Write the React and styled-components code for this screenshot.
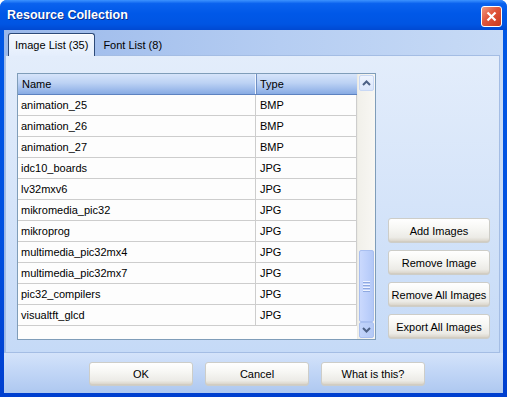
import React from "react";
import styled, { createGlobalStyle } from "styled-components";

const GlobalStyle = createGlobalStyle`
  html, body {
    margin: 0;
    padding: 0;
    background: #ffffff;
  }
  body {
    font-family: "Liberation Sans", Arial, sans-serif;
    font-size: 11px;
    color: #000;
  }
`;

const Window = styled.div`
  width: 507px;
  height: 397px;
  box-sizing: border-box;
  display: flex;
  flex-direction: column;
  background: linear-gradient(to bottom, #0058e6 0%, #0050e0 60%, #003fcf 100%);
  border-radius: 7px 7px 0 0;
  overflow: hidden;
`;

const TitleBar = styled.div`
  height: 30px;
  flex: none;
  display: flex;
  align-items: center;
  justify-content: space-between;
  padding: 0 5px 0 7px;
  background: linear-gradient(
    to bottom,
    #3d93ff 0%,
    #0a62ee 12%,
    #0058e8 45%,
    #0055e3 80%,
    #0049d2 100%
  );
`;

const Title = styled.span`
  font-family: "Liberation Sans", Arial, sans-serif;
  font-weight: bold;
  font-size: 12.5px;
  color: #ffffff;
  text-shadow: 1px 1px 0 #0a2e8c;
`;

const CloseButton = styled.div`
  width: 21px;
  height: 21px;
  box-sizing: border-box;
  border: 1px solid #ffffff;
  border-radius: 3px;
  background: linear-gradient(135deg, #f09a80 0%, #e0553a 45%, #c9391d 100%);
  display: flex;
  align-items: center;
  justify-content: center;
  margin-top: 2px;
`;

const Body = styled.div`
  flex: 1;
  margin: 0 4px 4px 4px;
  display: flex;
  flex-direction: column;
  background: linear-gradient(to right, #9ab8ea 0%, #b5cdf2 55%, #c8dbf6 100%);
`;

const TabStrip = styled.div`
  height: 25px;
  flex: none;
  display: flex;
  align-items: flex-end;
  padding-left: 4px;
`;

const Tab = styled.div`
  height: ${(p) => (p.active ? "23px" : "21px")};
  box-sizing: border-box;
  padding: 0 ${(p) => (p.active ? "6px" : "8px")};
  display: flex;
  align-items: center;
  margin-bottom: ${(p) => (p.active ? "-1px" : "0")};
  position: relative;
  z-index: ${(p) => (p.active ? 2 : 1)};
  color: #000;
  ${(p) =>
    p.active &&
    `
    border: 1px solid #2d4a78;
    border-bottom: none;
    border-radius: 3px 3px 0 0;
    background: linear-gradient(to bottom, #f4f8fe 0%, #e4eefc 100%);
    box-shadow: inset 0 1px 0 #ffffff;
  `}
`;

const Panel = styled.div`
  height: 298px;
  flex: none;
  margin: 0 3px 0 1px;
  box-sizing: border-box;
  border: 1px solid #a4bde4;
  background: linear-gradient(to bottom, #e3edfb 0%, #d5e4f9 50%, #c5daf7 100%);
  display: flex;
  align-items: flex-end;
  padding: 17px 0 13px 11px;
  gap: 12px;
`;

const Grid = styled.div`
  width: 359px;
  height: 267px;
  box-sizing: border-box;
  border: 1px solid #7f9db9;
  background: #ffffff;
  display: flex;
  flex: none;
  align-self: flex-start;
`;

const ListArea = styled.div`
  flex: 1;
  display: flex;
  flex-direction: column;
  background: #fdfdfd;
`;

const HeaderRow = styled.div`
  display: flex;
  height: 21px;
  box-sizing: border-box;
  border-bottom: 1px solid #5d82c0;
  background: linear-gradient(to bottom, #d6e4fa 0%, #bcd2f4 45%, #9bb9ea 80%, #88abe3 100%);
`;

const HeaderCell = styled.div`
  width: ${(p) => p.w}px;
  box-sizing: border-box;
  padding-left: 4px;
  display: flex;
  align-items: center;
  border-right: 1px solid ${(p) => (p.last ? "transparent" : "#f0f5fd")};
  box-shadow: ${(p) => (p.last ? "none" : "1px 0 0 #6f8fc4")};
`;

const Row = styled.div`
  display: flex;
  height: 21px;
  box-sizing: border-box;
  border-bottom: 1px solid #cdcdcd;
`;

const Cell = styled.div`
  width: ${(p) => p.w}px;
  box-sizing: border-box;
  padding-left: ${(p) => p.pad}px;
  display: flex;
  align-items: center;
  border-right: 1px solid #cdcdcd;
  white-space: nowrap;
`;

const ScrollBar = styled.div`
  width: 18px;
  flex: none;
  display: flex;
  flex-direction: column;
  align-items: center;
  background: linear-gradient(to right, #f1f0ea 0%, #f8f7f3 100%);
  border-left: 1px solid #ecebe4;
  padding: 1px 0 1px 0;
  box-sizing: border-box;
`;

const ScrollButton = styled.div`
  width: 15px;
  height: 16px;
  box-sizing: border-box;
  border: 1px solid ${(p) => (p.blue ? "#aac0f0" : "#c8d8f5")};
  border-radius: 2px;
  background: ${(p) =>
    p.blue
      ? "linear-gradient(to right, #c2d4fb, #b4c9f5)"
      : "linear-gradient(to bottom, #eef4fe, #dbe6fb)"};
  display: flex;
  align-items: center;
  justify-content: center;
`;

const Spacer = styled.div`
  flex: 1;
`;

const Thumb = styled.div`
  width: 15px;
  height: 72px;
  box-sizing: border-box;
  border: 1px solid #a9bff0;
  border-radius: 2px;
  background: linear-gradient(to right, #cad9fd 0%, #bccffb 60%, #b3c8f6 100%);
  display: flex;
  flex-direction: column;
  align-items: center;
  justify-content: center;
  gap: 1px;
`;

const Grip = styled.div`
  width: 7px;
  height: 1px;
  background: #eef3fe;
  box-shadow: 0 1px 0 #8fa9e0;
  margin-bottom: 1px;
`;

const SideButtons = styled.div`
  display: flex;
  flex-direction: column;
  gap: 7px;
`;

const Button = styled.div`
  width: ${(p) => p.w || 102}px;
  height: ${(p) => p.h || 25}px;
  box-sizing: border-box;
  border: 1px solid #cdcdc8;
  border-radius: 3px;
  background: linear-gradient(to bottom, #ffffff 0%, #f7f7f4 40%, #ecebe6 80%, #d6d0c5 100%);
  box-shadow: inset 0 -1px 0 #d2cdc2;
  display: flex;
  align-items: center;
  justify-content: center;
  white-space: nowrap;
  color: #000;
`;

const Footer = styled.div`
  flex: 1;
  display: flex;
  align-items: flex-start;
  padding: 9px 0 0 85px;
  gap: 12px;
  background: linear-gradient(to bottom, #d4e3fa 0%, #c4d8f7 40%, #aec8f0 100%);
`;

const Chevron = ({ up }) => (
  <svg width="9" height="6" viewBox="0 0 9 6">
    <path
      d={up ? "M1 5 L4.5 1.5 L8 5" : "M1 1 L4.5 4.5 L8 1"}
      fill="none"
      stroke="#4d6185"
      strokeWidth="2"
    />
  </svg>
);

const rows = [
  ["animation_25", "BMP"],
  ["animation_26", "BMP"],
  ["animation_27", "BMP"],
  ["idc10_boards", "JPG"],
  ["lv32mxv6", "JPG"],
  ["mikromedia_pic32", "JPG"],
  ["mikroprog", "JPG"],
  ["multimedia_pic32mx4", "JPG"],
  ["multimedia_pic32mx7", "JPG"],
  ["pic32_compilers", "JPG"],
  ["visualtft_glcd", "JPG"],
];

const App = () => {
  return (
    <>
      <GlobalStyle />
      <Window>
        <TitleBar>
          <Title>Resource Collection</Title>
          <CloseButton>
            <svg width="11" height="11" viewBox="0 0 11 11">
              <path d="M1.5 1.5 L9.5 9.5 M9.5 1.5 L1.5 9.5" stroke="#ffffff" strokeWidth="2.2" />
            </svg>
          </CloseButton>
        </TitleBar>
        <Body>
          <TabStrip>
            <Tab active>Image List (35)</Tab>
            <Tab>Font List (8)</Tab>
          </TabStrip>
          <Panel>
            <Grid>
              <ListArea>
                <HeaderRow>
                  <HeaderCell w={238}>Name</HeaderCell>
                  <HeaderCell w={101} last>
                    Type
                  </HeaderCell>
                </HeaderRow>
                {rows.map(([name, type]) => (
                  <Row key={name}>
                    <Cell w={238} pad={3}>
                      {name}
                    </Cell>
                    <Cell w={101} pad={4}>
                      {type}
                    </Cell>
                  </Row>
                ))}
              </ListArea>
              <ScrollBar>
                <ScrollButton>
                  <Chevron up />
                </ScrollButton>
                <Spacer />
                <Thumb>
                  <Grip />
                  <Grip />
                  <Grip />
                  <Grip />
                </Thumb>
                <ScrollButton blue>
                  <Chevron />
                </ScrollButton>
              </ScrollBar>
            </Grid>
            <SideButtons>
              <Button>Add Images</Button>
              <Button>Remove Image</Button>
              <Button>Remove All Images</Button>
              <Button>Export All Images</Button>
            </SideButtons>
          </Panel>
          <Footer>
            <Button w={104} h={24}>OK</Button>
            <Button w={104} h={24}>Cancel</Button>
            <Button w={104} h={24}>What is this?</Button>
          </Footer>
        </Body>
      </Window>
    </>
  );
};

export default App;
